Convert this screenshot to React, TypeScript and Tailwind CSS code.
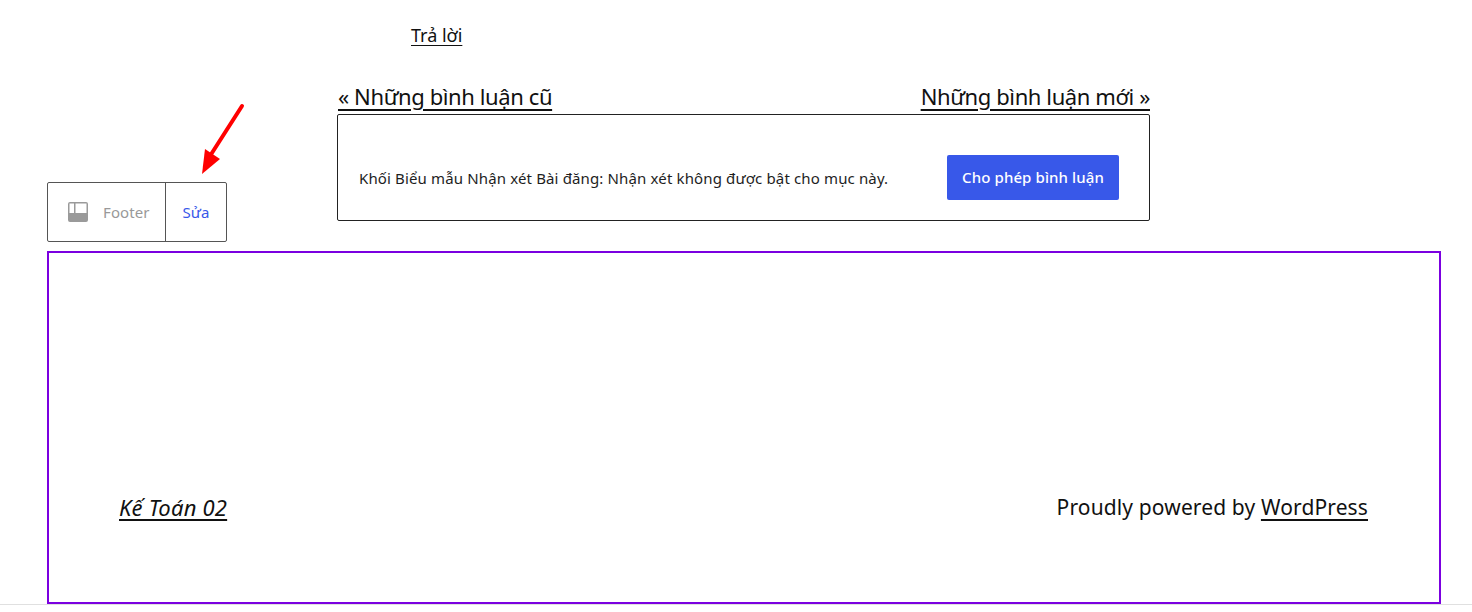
import React from 'react';

const FONT = "font-['Noto_Sans','Open_Sans',sans-serif]";

const FooterIcon: React.FC = () => (
  <svg width="22" height="22" viewBox="0 0 22 22" className="shrink-0">
    <path fillRule="evenodd" fill="#9a9a9a" d="M3 1h16a2 2 0 0 1 2 2v16a2 2 0 0 1-2 2H3a2 2 0 0 1-2-2V3a2 2 0 0 1 2-2zm-0.5 1.500v9.500h4.500V2.500H2.500zm6 0v9.500h11V2.500H8.500z" />
  </svg>
);

const App: React.FC = () => {
  return (
    <div className={`relative w-[1472px] h-[612px] overflow-hidden bg-white text-[#111] ${FONT}`}>
      <div className="flex items-start pl-[47px] h-[251px]">
        <div className="mt-[182px] w-[180px] h-[60px] flex border border-[#555] rounded-[2px] text-[15px]">
          <div className="w-[118px] flex items-center pl-[19px] gap-[14px] border-r border-[#555] text-[#999]">
            <FooterIcon />
            <span className="tracking-[0.1px] pt-px">Footer</span>
          </div>
          <div className="flex-1 flex items-center justify-center pt-px text-[#3858e9]">Sửa</div>
        </div>
        <div className="ml-[110px] w-[813px]">
          <div className="pl-[74px] pt-[22px] h-[84px] text-[18px] leading-[26px]">
            <a className="underline underline-offset-[3px]">Trả lời</a>
          </div>
          <div className="flex justify-between h-[30px] pl-px text-[22px] leading-[24px] tracking-[-0.4px]">
            <a className="underline decoration-2 underline-offset-[4px]">« Những bình luận cũ</a>
            <a className="underline decoration-2 underline-offset-[4px]">Những bình luận mới »</a>
          </div>
          <div className="h-[107px] flex items-center justify-between pl-[21px] pr-[30px] pt-[20px] border border-[#222] rounded-[2px] text-[15px] text-[#1e1e1e]">
            <p className="tracking-[0.14px] pt-px">Khối Biểu mẫu Nhận xét Bài đăng: Nhận xét không được bật cho mục này.</p>
            <button className="w-[172px] h-[45px] bg-[#3858e9] text-white rounded-[2px] text-[15px] font-medium tracking-[0.1px]">Cho phép bình luận</button>
          </div>
        </div>
      </div>
      <div className="relative ml-[47px] w-[1394px] h-[353px] border-2 border-[#7b00e0] flex items-start justify-between pl-[70px] pr-[71px] pt-[240px] text-[21px] leading-[28px]">
        <a className="italic underline decoration-2 underline-offset-[3px] text-[22px] tracking-[0.2px]">Kế Toán 02</a>
        <p className="tracking-[0.13px]">Proudly powered by <a className="underline decoration-2 underline-offset-[4px]">WordPress</a></p>
      </div>
      <div className="absolute left-0 top-[604px] w-full h-px bg-[#e0e0e0]" />
      <svg className="absolute left-[195px] top-[100px]" width="55" height="80" viewBox="0 0 55 80">
        <path d="M47 6 L15 56" stroke="#ff0000" strokeWidth="4" strokeLinecap="round" />
        <path d="M7 74 L10 49 L25 59 Z" fill="#ff0000" />
      </svg>
    </div>
  );
};

export default App;
